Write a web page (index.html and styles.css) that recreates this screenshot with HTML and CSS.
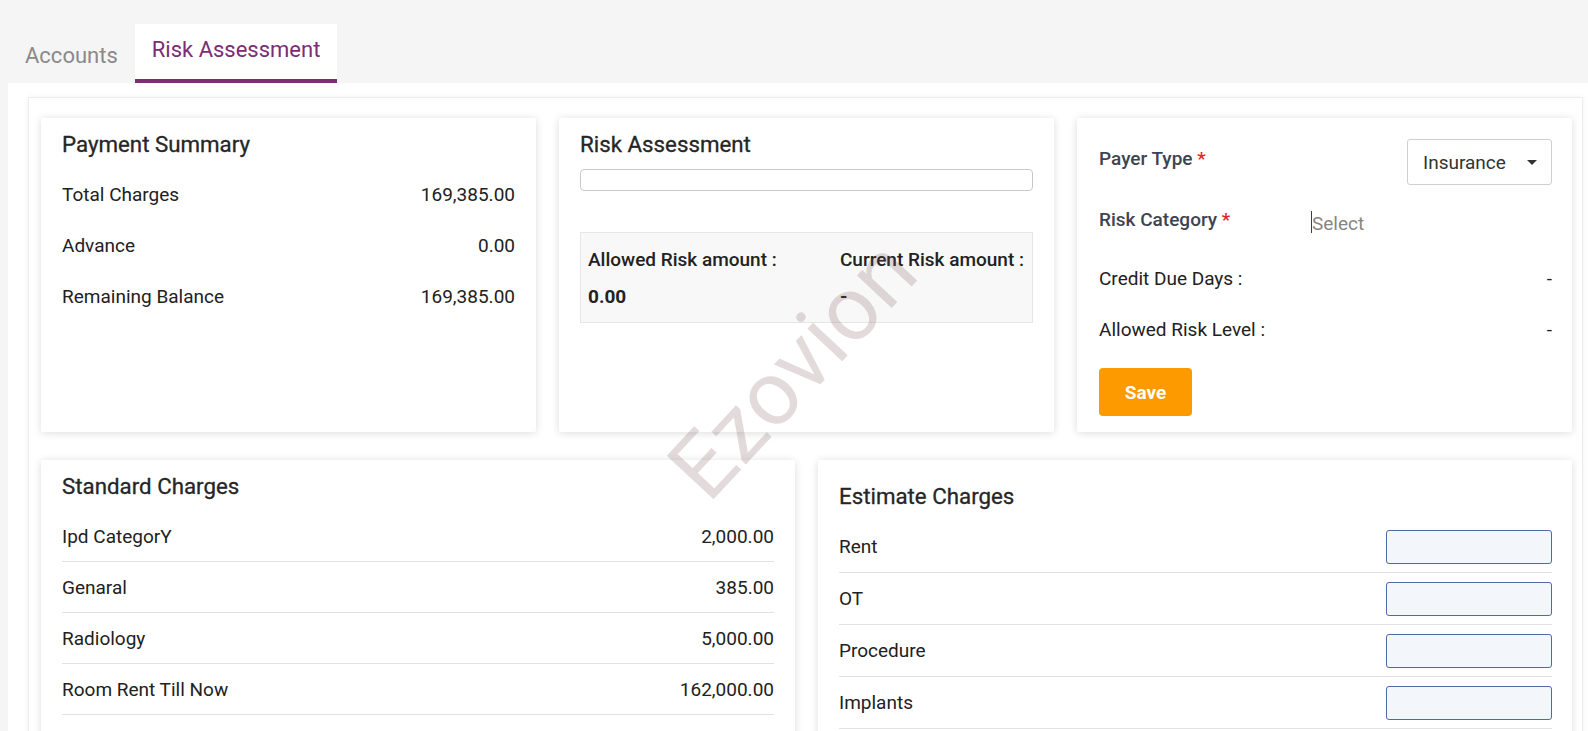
FILE: index.html
```html
<!DOCTYPE html>
<html>
<head>
    <meta charset="utf-8">
    <title>Risk Assessment</title>
    <link rel="stylesheet" href="styles.css">
</head>
<body>
<div class="tabs">
    <div class="tab">Accounts</div>
    <div class="tab active">Risk Assessment</div>
</div>
<div class="panel">
    <div class="sheet">
        <div class="grid three">
            <div class="card">
                <div class="card-title">Payment Summary</div>
                <div class="line plain"><span>Total Charges</span><span>169,385.00</span></div>
                <div class="line plain"><span>Advance</span><span>0.00</span></div>
                <div class="line plain"><span>Remaining Balance</span><span>169,385.00</span></div>
            </div>
            <div class="card">
                <div class="card-title">Risk Assessment</div>
                <div class="progress"></div>
                <div class="risk-box">
                    <div class="risk-col">
                        <div class="risk-label">Allowed Risk amount :</div>
                        <div class="risk-value">0.00</div>
                    </div>
                    <div class="risk-col">
                        <div class="risk-label">Current Risk amount :</div>
                        <div class="risk-value">-</div>
                    </div>
                </div>
            </div>
            <div class="card form-card">
                <div class="field first">
                    <span class="field-label">Payer Type <em>*</em></span>
                    <div class="dropdown">Insurance <span class="caret"></span></div>
                </div>
                <div class="field second">
                    <span class="field-label wide">Risk Category <em>*</em></span>
                    <div class="picker"><span class="cursor"></span>Select</div>
                </div>
                <div class="field third">
                    <span>Credit Due Days :</span><span>-</span>
                </div>
                <div class="field fourth">
                    <span>Allowed Risk Level :</span><span>-</span>
                </div>
                <button class="save">Save</button>
            </div>
        </div>
        <div class="grid two">
            <div class="card">
                <div class="card-title">Standard Charges</div>
                <div class="line"><span>Ipd CategorY</span><span>2,000.00</span></div>
                <div class="line"><span>Genaral</span><span>385.00</span></div>
                <div class="line"><span>Radiology</span><span>5,000.00</span></div>
                <div class="line"><span>Room Rent Till Now</span><span>162,000.00</span></div>
            </div>
            <div class="card estimate">
                <div class="card-title">Estimate Charges</div>
                <div class="line input-line"><span>Rent</span><input type="text"></div>
                <div class="line input-line"><span>OT</span><input type="text"></div>
                <div class="line input-line"><span>Procedure</span><input type="text"></div>
                <div class="line input-line"><span>Implants</span><input type="text"></div>
            </div>
        </div>
    </div>
</div>
<div class="watermark">Ezovion</div>
</body>
</html>
```

FILE: styles.css
```css
/* page */
body { margin: 0; font-family: Roboto, "Liberation Sans", Arial, sans-serif; font-size: 19px; line-height: 24px; color: #212121; background: #f5f5f5; overflow: hidden; }

/* tabs */
.tabs { display: flex; align-items: flex-end; height: 83px; padding-left: 8px; box-sizing: border-box; }
.tab { font-size: 22px; line-height: 24px; padding: 0 17px 11px; border-bottom: 4px solid transparent; color: #8a8a8a; }
.tab.active { background: #fff; color: #7b2d75; padding: 14px 17px 17px; border-bottom-color: #7b2d75; }

/* content */
.panel { margin-left: 8px; background: #fff; padding: 14px 5px 0 20px; min-height: 700px; }
.sheet { border: 1px solid #ececec; box-shadow: 0 0 6px rgba(0,0,0,0.05); padding: 20px 10px 0 12px; min-height: 700px; }
.grid { display: grid; gap: 23px; }
.grid.three { grid-template-columns: repeat(3, 1fr); }
.grid.two { grid-template-columns: repeat(2, 1fr); margin-top: 28px; }

.card { background: #fff; border-radius: 2px; box-shadow: 0 1px 8px rgba(0,0,0,0.14); padding: 13px 21px 16px 21px; }
.card-title { font-size: 22.3px; line-height: 26px; font-weight: 400; color: #262626; -webkit-text-stroke: 0.3px #262626; margin-bottom: 12px; }
.card.estimate { padding-top: 23px; padding-right: 20px; }

.line { display: flex; justify-content: space-between; align-items: center; padding: 14px 0 12px; border-bottom: 1px solid #e2e2e2; }
.line.plain { border-bottom-color: transparent; }
.line.input-line { padding: 9px 0 8px; }
.line input { width: 166px; height: 34px; box-sizing: border-box; border: 1px solid #4f6ba3; border-radius: 3px; background: #f3f6fb; }

/* risk assessment */
.progress { height: 22px; box-sizing: border-box; border: 1px solid #c8c8c8; border-radius: 4px; }
.risk-box { margin-top: 41px; background: #f8f8f8; border: 1px solid #e6e6e6; padding: 15px 8px 13px 7px; display: flex; justify-content: space-between; }
.risk-label { font-weight: 500; color: #222; }
.risk-value { font-weight: 700; margin-top: 13px; color: #222; }

/* form card */
.form-card { padding: 21px 20px 16px 22px; }
.field { display: flex; justify-content: space-between; }
.field-label { font-weight: 500; color: #3d4451; }
.field-label em { font-style: normal; color: #e02424; }
.field.first { height: 46px; }
.field.first .field-label { padding-top: 8px; }
.field.second { margin-top: 23px; justify-content: flex-start; }
.field-label.wide { width: 212px; }
.field.third { margin-top: 31px; }
.field.fourth { margin-top: 27px; }
.dropdown { width: 145px; height: 46px; box-sizing: border-box; border: 1px solid #cfcfcf; border-radius: 3px; padding: 11px 14px 0 15px; color: #333; display: flex; justify-content: space-between; }
.caret { width: 0; height: 0; margin-top: 9px; border-left: 5px solid transparent; border-right: 5px solid transparent; border-top: 5px solid #333; }
.picker { display: flex; align-items: flex-start; margin-top: 4px; color: #858585; }
.cursor { width: 1px; height: 22px; background: #5b2d55; margin-top: -1px; }
.save { margin-top: 26px; width: 93px; height: 48px; border: none; border-radius: 4px; background: #fd9a00; color: #fff; font-family: inherit; font-size: 19px; font-weight: 700; }

/* watermark */
.watermark { position: absolute; left: 793px; top: 370px; transform: translate(-50%, -50%) rotate(-47deg); font-size: 90px; line-height: 1; color: rgba(120,80,85,0.21); pointer-events: none; }
```
